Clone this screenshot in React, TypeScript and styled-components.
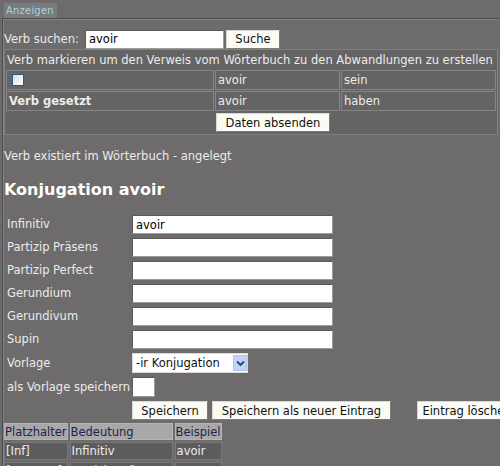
import React from "react";
import styled, { createGlobalStyle } from "styled-components";

const Global = createGlobalStyle`
  html, body { margin: 0; padding: 0; overflow: hidden; }
  body {
    background: #6d6b6b;
    font-family: "DejaVu Sans", Verdana, sans-serif;
    font-size: 11.5px;
    color: #ececec;
    width: 500px;
    height: 466px;
  }
`;

const Page = styled.div`
  width: 500px;
  height: 466px;
  overflow: hidden;
`;

const TabBar = styled.div`
  height: 18px;
  padding: 3px 0 0 4px;
  box-sizing: border-box;
  display: flex;
  align-items: flex-start;
`;

const Tab = styled.span`
  display: inline-block;
  height: 15px;
  line-height: 15px;
  padding: 0 3px 0 2px;
  background: #7b7b7b;
  color: #a7d3e3;
  font-size: 10px;
  letter-spacing: 0.2px;
`;

const Frame = styled.div`
  margin-left: 2px;
  width: 580px;
  border-top: 1px solid #4e4d4d;
  border-left: 1px solid #4e4d4d;
  box-shadow: inset 1px 1px 0 #848282;
  padding: 11px 0 0 1px;
  min-height: 460px;
`;

const SearchRow = styled.form`
  display: flex;
  align-items: center;
  height: 18px;
`;

const SearchLabel = styled.label`
  width: 81px;
  white-space: nowrap;
`;

const TextInput = styled.input<{ $w: number }>`
  box-sizing: border-box;
  width: ${(p) => p.$w}px;
  height: 19px;
  margin: 0;
  padding: 0 3px;
  border: 1px solid #9c9c9c;
  border-top-color: #5a5a5a;
  border-left-color: #5a5a5a;
  background: #ffffff;
  font-family: "DejaVu Sans", Verdana, sans-serif;
  font-size: 11.5px;
  color: #000;
  outline: none;
`;

const Button = styled.button<{ $w: number; $ml?: number }>`
  box-sizing: border-box;
  width: ${(p) => p.$w}px;
  height: 19px;
  margin: 0 0 0 ${(p) => p.$ml ?? 0}px;
  padding: 0;
  background: #fbfbf6;
  border: 1px solid #d8d8cc;
  border-right-color: #7c7c70;
  border-bottom-color: #7c7c70;
  font-family: "DejaVu Sans", Verdana, sans-serif;
  font-size: 11.5px;
  color: #111;
  white-space: nowrap;
  overflow: hidden;
  text-align: center;
  flex-shrink: 0;
  display: block;
`;

const LinkTable = styled.table`
  margin-top: 1px;
  width: 493px;
  border: 1px solid #828080;
  border-spacing: 1px;
  background: #656464;
  table-layout: fixed;
`;

const LinkCol = styled.col<{ $w: number }>`
  width: ${(p) => p.$w}px;
`;

const LinkCell = styled.td<{ $boxed?: boolean; $h?: number }>`
  box-sizing: border-box;
  height: ${(p) => p.$h ?? 20}px;
  padding: 0 ${(p) => (p.$boxed ? 2 : 0)}px;
  border: 1px solid ${(p) => (p.$boxed ? "#868484" : "transparent")};
  white-space: nowrap;
  overflow: hidden;
  vertical-align: middle;
`;

const Bold = styled.span`
  font-weight: bold;
`;

const CheckBox = styled.input`
  appearance: none;
  display: block;
  width: 12px;
  height: 12px;
  margin: 0 0 0 3px;
  border: 1px solid #2a5a8c;
  background: linear-gradient(135deg, #dcdcd6, #ffffff);
`;

const Status = styled.p`
  margin: 14px 0 0 0;
  height: 14px;
  line-height: 14px;
`;

const Heading = styled.h2`
  margin: 17px 0 0 0;
  font-size: 16px;
  font-weight: bold;
  color: #ffffff;
  height: 20px;
  line-height: 20px;
`;

const FormGrid = styled.div`
  margin-top: 15px;
  display: grid;
  grid-template-columns: 128px auto;
  row-gap: 4px;
  align-items: center;
`;

const FieldLabel = styled.label`
  padding-left: 3px;
  white-space: nowrap;
  line-height: 19px;
`;

const SelectWrap = styled.div`
  position: relative;
  width: 116px;
  height: 20px;
`;

const Select = styled.select`
  appearance: none;
  box-sizing: border-box;
  width: 116px;
  height: 20px;
  margin: 0;
  padding: 0 0 0 3px;
  border: 1px solid #d8d8d8;
  background: #ffffff;
  font-family: "DejaVu Sans", Verdana, sans-serif;
  font-size: 11.5px;
  color: #111;
  outline: none;
`;

const SelectArrow = styled.span`
  position: absolute;
  right: 1px;
  top: 2px;
  width: 14px;
  height: 16px;
  background: #c3d3f3;
  border: 1px solid #b3c3e3;
  box-sizing: border-box;
  display: flex;
  align-items: center;
  justify-content: center;
  pointer-events: none;
`;

const SmallBox = styled.input`
  appearance: none;
  display: block;
  box-sizing: border-box;
  width: 23px;
  height: 20px;
  margin: 0;
  border: 1px solid #9a9a9a;
  border-top-color: #5a5a5a;
  border-left-color: #5a5a5a;
  background: #ffffff;
`;

const ButtonRow = styled.div`
  grid-column: 2;
  display: flex;
`;

const HelpTable = styled.table`
  margin-top: 1px;
  border-spacing: 2px 2px;
  margin-left: -2px;
`;

const HelpHead = styled.th<{ $w?: number }>`
  box-sizing: border-box;
  ${(p) => (p.$w ? `width: ${p.$w}px;` : "")}
  height: 17px;
  padding: 0;
  background: #a9a8a8;
  border: 1px solid #b6b5b5;
  color: #1e2250;
  font-weight: normal;
  text-align: left;
  white-space: nowrap;
`;

const HelpCell = styled.td`
  height: 16px;
  padding: 0 1px;
  background: #5d5c5c;
  border: 1px solid #787676;
  white-space: nowrap;
`;

const fields = [
  ["Infinitiv", "avoir"],
  ["Partizip Präsens", ""],
  ["Partizip Perfect", ""],
  ["Gerundium", ""],
  ["Gerundivum", ""],
  ["Supin", ""],
];

const helpRows = [
  ["[Inf]", "Infinitiv", "avoir"],
  ["[PartPras]", "Partizip Präsens", ""],
];

export default function App() {
  return (
    <Page>
      <Global />
      <TabBar>
        <Tab>Anzeigen</Tab>
      </TabBar>
      <Frame>
        <SearchRow onSubmit={(e) => e.preventDefault()}>
          <SearchLabel>Verb suchen:</SearchLabel>
          <TextInput $w={139} defaultValue="avoir" />
          <Button $w={54} $ml={2} type="submit">
            Suche
          </Button>
        </SearchRow>
        <LinkTable>
          <colgroup>
            <LinkCol $w={208} />
            <LinkCol $w={125} />
            <LinkCol $w={155} />
          </colgroup>
          <tbody>
            <tr>
              <LinkCell colSpan={3} $h={18}>
                Verb markieren um den Verweis vom Wörterbuch zu den Abwandlungen zu erstellen
              </LinkCell>
            </tr>
            <tr>
              <LinkCell $boxed>
                <CheckBox type="checkbox" />
              </LinkCell>
              <LinkCell $boxed>avoir</LinkCell>
              <LinkCell $boxed>sein</LinkCell>
            </tr>
            <tr>
              <LinkCell $boxed>
                <Bold>Verb gesetzt</Bold>
              </LinkCell>
              <LinkCell $boxed>avoir</LinkCell>
              <LinkCell $boxed>haben</LinkCell>
            </tr>
            <tr>
              <LinkCell $h={20} />
              <LinkCell colSpan={2} $h={20}>
                <Button $w={114} $ml={0} type="button">
                  Daten absenden
                </Button>
              </LinkCell>
            </tr>
          </tbody>
        </LinkTable>
        <Status>Verb existiert im Wörterbuch - angelegt</Status>
        <Heading>Konjugation avoir</Heading>
        <FormGrid>
          {fields.map(([label, value]) => (
            <React.Fragment key={label}>
              <FieldLabel>{label}</FieldLabel>
              <TextInput $w={201} defaultValue={value} />
            </React.Fragment>
          ))}
          <FieldLabel>Vorlage</FieldLabel>
          <SelectWrap>
            <Select defaultValue="ir">
              <option value="ir">-ir Konjugation</option>
              <option value="er">-er Konjugation</option>
              <option value="re">-re Konjugation</option>
            </Select>
            <SelectArrow>
              <svg width="9" height="7" viewBox="0 0 9 7">
                <path d="M1 1.5 L4.5 5 L8 1.5" fill="none" stroke="#2b3f7a" strokeWidth="1.8" />
              </svg>
            </SelectArrow>
          </SelectWrap>
          <FieldLabel>als Vorlage speichern</FieldLabel>
          <SmallBox type="text" />
          <ButtonRow>
            <Button $w={76} type="button">
              Speichern
            </Button>
            <Button $w={179} $ml={4} type="button">
              Speichern als neuer Eintrag
            </Button>
            <Button $w={100} $ml={26} type="button">
              Eintrag löschen
            </Button>
          </ButtonRow>
        </FormGrid>
        <HelpTable>
          <thead>
            <tr>
              <HelpHead>Platzhalter</HelpHead>
              <HelpHead $w={103}>Bedeutung</HelpHead>
              <HelpHead $w={44}>Beispiel</HelpHead>
            </tr>
          </thead>
          <tbody>
            {helpRows.map((r) => (
              <tr key={r[0]}>
                <HelpCell>{r[0]}</HelpCell>
                <HelpCell>{r[1]}</HelpCell>
                <HelpCell>{r[2]}</HelpCell>
              </tr>
            ))}
          </tbody>
        </HelpTable>
      </Frame>
    </Page>
  );
}
